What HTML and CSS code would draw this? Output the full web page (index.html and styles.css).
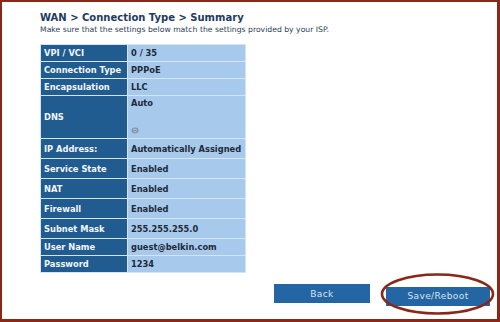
FILE: index.html
```html
<!DOCTYPE html>
<html lang="en">
<head>
    <meta charset="UTF-8">
    <title>WAN Summary</title>
    <link rel="stylesheet" href="styles.css">
</head>
<body>
    <div class="frame">
        <h1 class="title">WAN &gt; Connection Type &gt; Summary</h1>
        <p class="sub">Make sure that the settings below match the settings provided by your ISP.</p>

        <table class="summary">
            <tr class="short"><td class="lbl">VPI / VCI</td><td class="val">0 / 35</td></tr>
            <tr class="short"><td class="lbl">Connection Type</td><td class="val">PPPoE</td></tr>
            <tr class="short"><td class="lbl">Encapsulation</td><td class="val">LLC</td></tr>
            <tr class="dns">
                <td class="lbl">DNS</td>
                <td class="val dnsval">
                    <div>Auto</div>
                    <svg class="globe" width="8" height="7" viewBox="0 0 8 7"><ellipse cx="4" cy="3.5" rx="3.5" ry="3" fill="#7f93ab"/><path d="M2 2.5 Q4 1.5 6 3 M2.5 5 Q4 4 5.5 5" stroke="#c4d6ea" stroke-width="0.8" fill="none"/></svg>
                </td>
            </tr>
            <tr class="tall"><td class="lbl">IP Address:</td><td class="val">Automatically Assigned</td></tr>
            <tr class="tall"><td class="lbl">Service State</td><td class="val">Enabled</td></tr>
            <tr class="tall"><td class="lbl">NAT</td><td class="val">Enabled</td></tr>
            <tr class="tall"><td class="lbl">Firewall</td><td class="val">Enabled</td></tr>
            <tr class="tall"><td class="lbl">Subnet Mask</td><td class="val">255.255.255.0</td></tr>
            <tr class="short"><td class="lbl">User Name</td><td class="val">guest@belkin.com</td></tr>
            <tr class="short"><td class="lbl">Password</td><td class="val">1234</td></tr>
        </table>

        <div class="actions">
            <button class="btn back">Back</button>
            <div class="circled">
                <button class="btn save">Save/Reboot</button>
                <svg class="ring" width="115" height="42" viewBox="0 0 115 42"><ellipse cx="57.5" cy="21" rx="55.5" ry="19.5" fill="none" stroke="#8a2718" stroke-width="2.6"/></svg>
            </div>
        </div>
    </div>
</body>
</html>
```

FILE: styles.css
```css
* {
    box-sizing: border-box;
}

body {
    margin: 0;
    font-family: "DejaVu Sans", Verdana, sans-serif;
    background: #fff;
}

.frame {
    width: 500px;
    height: 322px;
    border: 2px solid #8b2718;
    border-right-width: 3px;
    border-bottom-width: 3px;
    padding: 9px 0 0 38px;
}

.title {
    margin: 0;
    font-size: 10px;
    line-height: 13px;
    font-weight: bold;
    color: #1d3b61;
}

.sub {
    margin: 1px 0 0 0;
    font-size: 7.7px;
    line-height: 9px;
    color: #2c3f57;
}

.summary {
    margin-top: 10px;
    border-spacing: 1px;
    background: #d4e4f3;
    font-size: 8.3px;
    font-weight: bold;
}

.summary td {
    padding: 0 3px;
    vertical-align: middle;
    white-space: nowrap;
}

.lbl {
    width: 86px;
    background: #215c91;
    color: #f2f6fa;
}

.val {
    width: 117px;
    background: #a7c9ec;
    color: #1f2a36;
}

.short td { height: 16px; }
.tall td { height: 19px; }
.dns td { height: 42px; }

.summary td.dnsval {
    vertical-align: top;
    padding-top: 2px;
}

.globe {
    display: block;
    margin-top: 19px;
}

.actions {
    display: flex;
    justify-content: flex-end;
    gap: 16px;
    margin-top: 11px;
    padding-right: 7px;
}

.btn {
    height: 19px;
    border: 0;
    background: #2466a3;
    color: #d9e3ee;
    font-family: "DejaVu Sans", Verdana, sans-serif;
    font-size: 9px;
    letter-spacing: 0.4px;
    padding: 0;
}

.back { width: 96px; }
.save { width: 104px; }

.circled {
    position: relative;
}

.ring {
    position: absolute;
    left: -6px;
    top: -11px;
}
```
